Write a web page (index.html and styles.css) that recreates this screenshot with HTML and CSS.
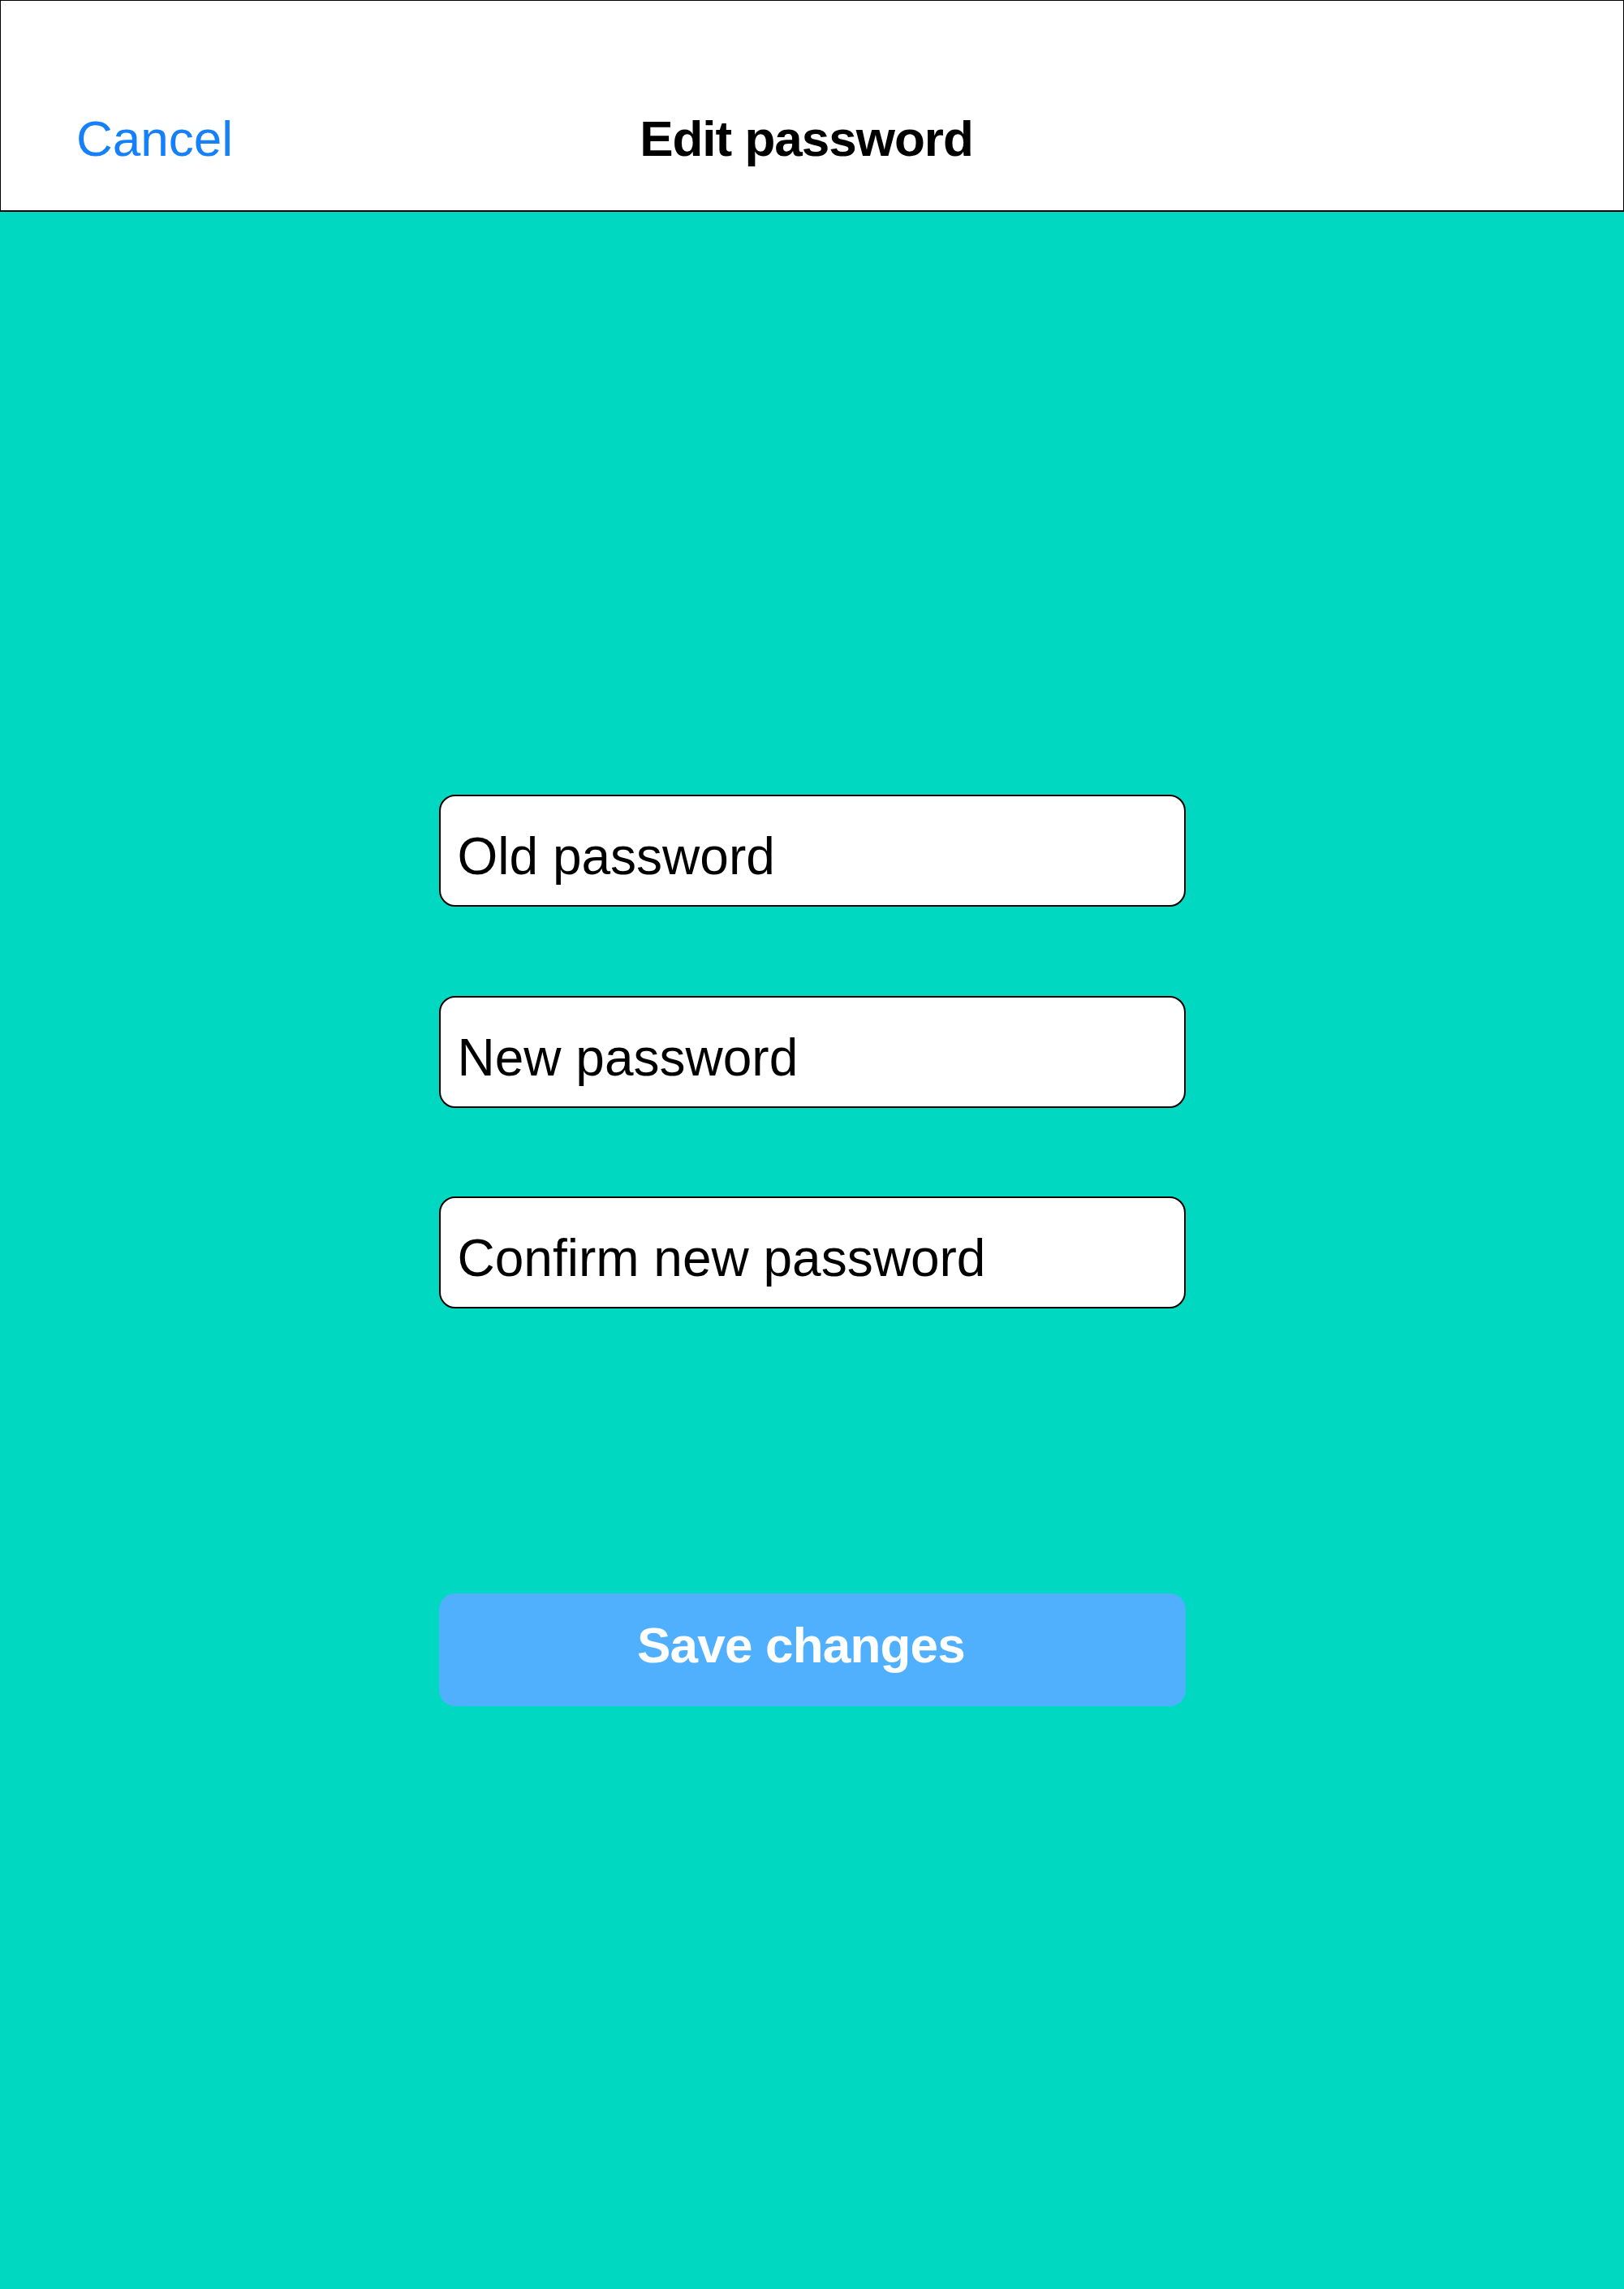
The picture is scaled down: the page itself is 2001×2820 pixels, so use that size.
FILE: index.html
```html
<!DOCTYPE html>
<html lang="en">
<head>
<meta charset="utf-8">
<title>Edit password</title>
<link rel="stylesheet" href="styles.css">
</head>
<body>
<header class="navbar">
  <a class="nav-cancel">Cancel</a>
  <h1 class="nav-title">Edit password</h1>
  <span class="nav-spacer"></span>
</header>
<main class="content">
  <form class="form">
    <div class="fields">
      <div class="field">Old password</div>
      <div class="field">New password</div>
      <div class="field">Confirm new password</div>
    </div>
    <button type="button" class="save-btn">Save changes</button>
  </form>
</main>
</body>
</html>
```
FILE: styles.css
```css
html, body {
  margin: 0;
  padding: 0;
}
body {
  width: 2001px;
  font-family: "Liberation Sans", Arial, Helvetica, sans-serif;
  background: #00d8c2;
}
.navbar {
  box-sizing: border-box;
  height: 261px;
  background: #ffffff;
  border: 1px solid #000;
  border-bottom: 2px solid #000;
  display: grid;
  grid-template-columns: 1fr auto 1fr;
  align-items: start;
  padding: 139px 107px 0 93px;
}
.nav-cancel {
  font-size: 62px;
  line-height: 62px;
  color: #1580fa;
  justify-self: start;
}
.nav-title {
  margin: 0;
  font-size: 62px;
  line-height: 62px;
  font-weight: bold;
  letter-spacing: -1px;
  color: #000;
}
.content {
  min-height: 2559px;
  background: #00d8c2;
}
.form {
  display: flex;
  flex-direction: column;
  align-items: center;
  padding-top: 718px;
}
.fields {
  display: flex;
  flex-direction: column;
  gap: 109.5px;
}
.field {
  box-sizing: border-box;
  width: 920px;
  height: 138px;
  background: #fff;
  border: 2px solid #000;
  border-radius: 20px;
  padding: 42px 0 0 21px;
  font-size: 64px;
  line-height: 64px;
  color: #000;
}
.save-btn {
  box-sizing: border-box;
  margin-top: 351px;
  width: 920px;
  height: 139px;
  border: none;
  border-radius: 20px;
  background: #51b0fe;
  color: #fff;
  font-family: "Liberation Sans", Arial, Helvetica, sans-serif;
  font-size: 62px;
  line-height: 62px;
  font-weight: bold;
  letter-spacing: -0.8px;
  text-align: center;
  display: flex;
  align-items: flex-start;
  justify-content: center;
  padding: 33px 27px 0 0;
}
```
